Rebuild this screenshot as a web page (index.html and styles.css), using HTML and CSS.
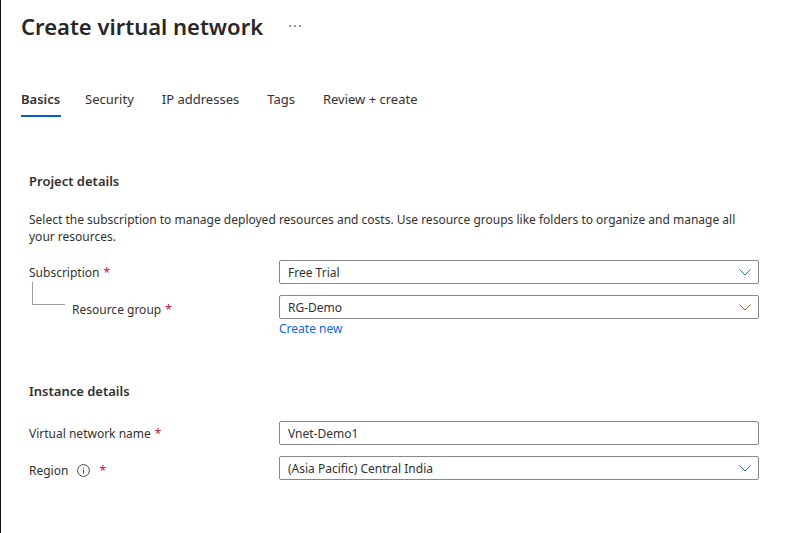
FILE: index.html
```html
<!DOCTYPE html>
<html lang="en">
<head>
<meta charset="utf-8">
<title>Create virtual network</title>
<link rel="stylesheet" href="styles.css">
</head>
<body>
<main class="blade">
  <header class="blade-header">
    <h1 class="title">Create virtual network</h1>
    <button class="more" type="button" aria-label="More actions">
      <svg width="12" height="2" viewBox="0 0 12 2" aria-hidden="true"><path d="M0 0h2v2H0zM5 0h2v2H5zM10 0h2v2h-2z" fill="#979593"/></svg>
    </button>
  </header>
  <nav class="tabs">
    <a class="tab tab-active" href="#basics" aria-current="page">Basics</a>
    <a class="tab" href="#security">Security</a>
    <a class="tab" href="#ip">IP addresses</a>
    <a class="tab" href="#tags">Tags</a>
    <a class="tab" href="#review">Review + create</a>
  </nav>
  <form class="form" id="basics">
    <section class="section">
      <h2 class="heading">Project details</h2>
      <p class="description">Select the subscription to manage deployed resources and costs. Use resource groups like folders to organize and manage all your resources.</p>
      <div class="row">
        <label class="label" for="subscription">Subscription <span class="required">*</span></label>
        <div class="field">
          <select class="control" id="subscription"><option>Free Trial</option></select>
          <svg class="chevron chevron-blue" viewBox="0 0 12 7" aria-hidden="true"><path d="M.5.5 6 6 11.5.5"/></svg>
        </div>
      </div>
      <div class="row">
        <div class="nested">
          <span class="branch"></span>
          <label class="label label-low" for="group">Resource group <span class="required">*</span></label>
        </div>
        <div>
          <div class="field">
            <select class="control" id="group"><option>RG-Demo</option></select>
            <svg class="chevron chevron-brown" viewBox="0 0 12 7" aria-hidden="true"><path d="M.5.5 6 6 11.5.5"/></svg>
          </div>
          <a class="link" href="#new">Create new</a>
        </div>
      </div>
    </section>
    <section class="section">
      <h2 class="heading">Instance details</h2>
      <div class="row">
        <label class="label" for="name">Virtual network name <span class="required">*</span></label>
        <div class="field"><input class="control" id="name" type="text" value="Vnet-Demo1"></div>
      </div>
      <div class="row">
        <label class="label label-low" for="region">Region
          <svg class="info" viewBox="0 0 13 13" aria-hidden="true"><circle cx="6.5" cy="6.5" r="5.9" fill="none" stroke="#484644"/><path d="M6 3.5h1v1H6zM6 5.5h1v4H6z" fill="#484644"/></svg>
          <span class="required">*</span></label>
        <div class="field">
          <select class="control" id="region"><option>(Asia Pacific) Central India</option></select>
          <svg class="chevron chevron-blue" viewBox="0 0 12 7" aria-hidden="true"><path d="M.5.5 6 6 11.5.5"/></svg>
        </div>
      </div>
    </section>
  </form>
</main>
</body>
</html>
```

FILE: styles.css
```css
* {
  box-sizing: border-box;
}

body {
  margin: 0;
  background: #fff;
  color: #323130;
  font: 12px/17px "Segoe UI", "Noto Sans", "Open Sans", sans-serif;
}

.blade {
  min-height: 100vh;
  padding: 10px 20px 0;
  border-left: 1px solid #111;
}

.blade-header {
  display: flex;
  align-items: center;
  gap: 20px;
}

.title {
  margin: 0;
  color: #292827;
  font-size: 22px;
  font-weight: 600;
  line-height: 32px;
}

.more {
  display: flex;
  padding: 6px;
  border: 0;
  background: none;
}

.tabs {
  display: flex;
  gap: 28px;
  margin-top: 48px;
}

.tab {
  padding-bottom: 7px;
  border-bottom: 2px solid transparent;
  color: #323130;
  font-size: 13px;
  line-height: 18px;
  text-decoration: none;
}

.tab-active {
  min-width: 40px;
  margin-right: -4px;
  border-color: #015cda;
  font-weight: 600;
}

.form {
  display: grid;
  gap: 44px;
  padding: 54px 24px 0 8px;
}

.section {
  display: grid;
  gap: 11px;
}

.heading {
  margin: 0 0 9px;
  font-size: 13px;
  font-weight: 600;
  line-height: 20px;
}

.description {
  margin: 0 0 4px;
}

.row {
  display: grid;
  grid-template-columns: 250px 1fr;
  align-items: start;
}

.label {
  display: flex;
  align-items: center;
  gap: 4px;
  padding-top: 4px;
}

.label-low {
  padding-top: 6px;
}

.required {
  color: #b5133a;
}

.nested {
  display: flex;
  gap: 7px;
  padding-left: 3px;
}

.branch {
  width: 33px;
  height: 23px;
  margin-top: -13px;
  border: solid #a19f9d;
  border-width: 0 0 1px 1px;
}

.field {
  position: relative;
}

.control {
  display: block;
  width: 100%;
  height: 24px;
  padding: 0 8px;
  appearance: none;
  border: 1px solid #8a8886;
  border-radius: 2px;
  background: #fff;
  color: #323130;
  font: inherit;
}

.chevron {
  position: absolute;
  top: 9px;
  right: 8px;
  width: 12px;
  height: 7px;
  fill: none;
  pointer-events: none;
}

.chevron-blue {
  stroke: #2f6f9f;
}

.chevron-brown {
  stroke: #985f3c;
}

.link {
  display: inline-block;
  margin-top: 1px;
  color: #1267dc;
  text-decoration: none;
}

.info {
  width: 13px;
  height: 13px;
  margin: 0 5px;
}
```
